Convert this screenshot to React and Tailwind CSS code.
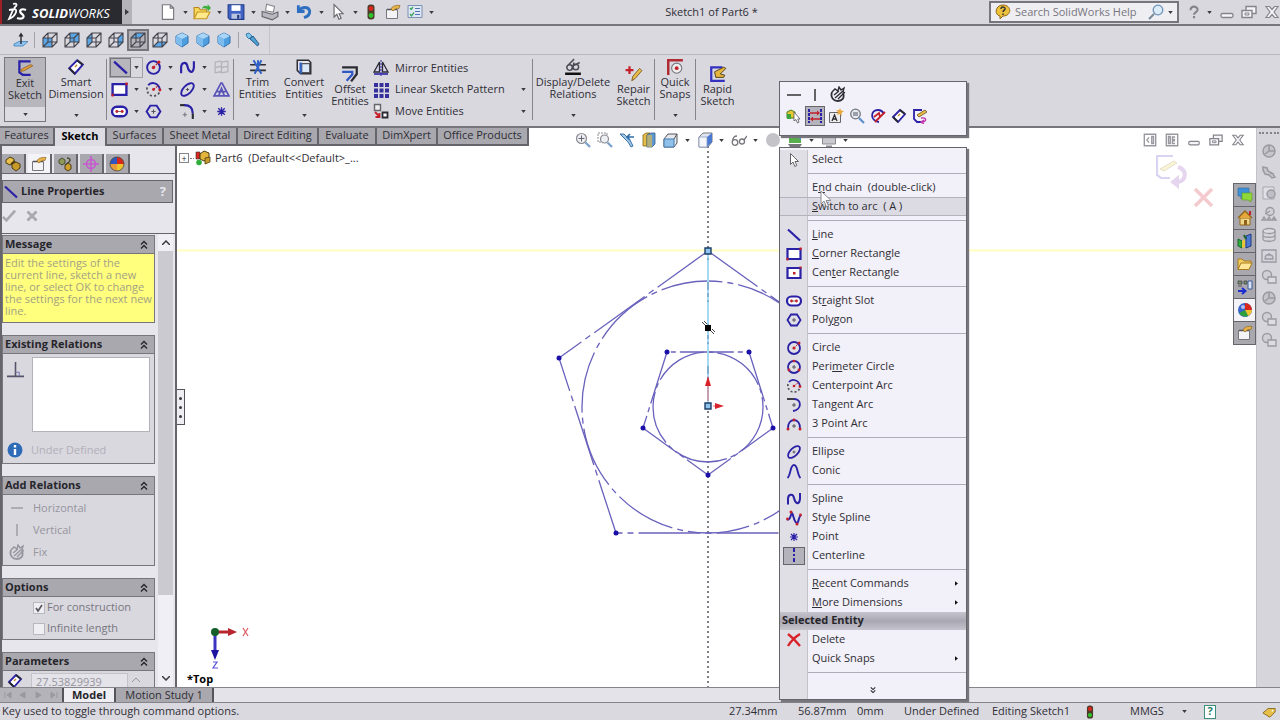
import { useState } from 'react'

const BLUE = '#2a21a6'
const RED = '#c3202c'
const DARK = '#2b2b33'
const GREY = '#9a98a0'

// every glyph is drawn on a 16x16 grid
const glyphs = {
  newDoc: <path d="M3 1.5h7l3 3v10H3z M10 1.5v3h3" fill="#fff" stroke="#77767c" />,
  open: (
    <>
      <path d="M1 14V4h4l1.5 2H12v3" fill="#f7d95a" stroke="#b8861b" />
      <path d="M1 14l3-6h11l-3 6z" fill="#ffe98a" stroke="#c8951f" />
      <path d="M8 5c1-3 3-3 5-2V1l3 3.500-3 3V5.500c-2-1-3-1-5-.5z" fill="#3cae3a" />
    </>
  ),
  save: (
    <>
      <path d="M1 1.500h14v13H2.500L1 13z" fill="#3f62c4" stroke="#233a84" />
      <path d="M4 2h8v5H4z" fill="#fff" />
      <path d="M4 9.500h8V14H4z" fill="#b9c4de" />
      <path d="M9 10.500h2V14H9z" fill="#233a84" />
    </>
  ),
  print: (
    <>
      <path d="M4 7l1-6 7 2-1 5z" fill="#fff" stroke="#8b8a90" />
      <path d="M1 7.500l9 2.500 5-2v4l-5 3-9-3z" fill="#b9b8c0" stroke="#66656c" />
    </>
  ),
  undo: <path d="M3 2v5.500h5.500M3.500 7C6 3 12 3 13 7c.5 3-2 5-5 6" fill="none" stroke="#2f6fc0" strokeWidth="2.600" />,
  cursor: <path d="M4.500 1.500v11l2.500-2.500 1.800 4.500 2-1L9 9.500h3.500z" fill="#fff" stroke="#66656c" />,
  traffic: (
    <>
      <rect x="4.500" y=".5" width="7" height="15" rx="3" fill="#4a3a2a" />
      <circle cx="8" cy="4.500" r="2.400" fill="#d8281e" />
      <circle cx="8" cy="11.500" r="2.400" fill="#2fc32b" />
    </>
  ),
  props: (
    <>
      <path d="M1.500 5.500h11v9h-11z" fill="#f4f3f6" stroke="#77767c" />
      <path d="M2 5.500h10" stroke="#55545a" strokeWidth="1.500" />
      <path d="M6 5c1-3 5-4 9-3.500l-1 3C12 4 10 5 8 7z" fill="#e8b24a" stroke="#8f6418" strokeWidth=".7" />
    </>
  ),
  options: (
    <>
      <path d="M1 1.500h14v12H1z" fill="#dfe8f4" stroke="#7a90b4" />
      <path d="M8 4.500h5M8 7.500h5M8 10.500h5" stroke="#4d75b8" />
      <path d="M3 4l1.200 1.500L6 3M3 10l1.500 2L7 8.500" fill="none" stroke="#3da55b" strokeWidth="1.300" />
    </>
  ),
  normalTo: (
    <>
      <path d="M1 12l5-2.500h9L10 14H1z" fill="#8ec3ee" stroke="#3c7db8" strokeWidth=".8" />
      <path d="M8 12V4" stroke={DARK} strokeWidth="1.400" />
      <path d="M8 .5l2.500 4h-5z" fill={DARK} />
    </>
  ),
  flashlight: (
    <>
      <path d="M1 2l3-1 3 3-3 3-2-2z" fill="#7fc4ea" stroke="#3d7fb0" />
      <path d="M5 7l3-3 6 8-1.500 2z" fill="#4e9fd2" stroke="#2c5f8a" />
    </>
  ),
  isoCube: (
    <>
      <path d="M8 1l6 3v7l-6 4-6-4V4z" fill="#4f9ee0" stroke="#2c6fae" />
      <path d="M8 1l6 3-6 3-6-3z" fill="#a9d5f6" />
      <path d="M8 7v8L2 11V4z" fill="#7fbcee" />
    </>
  ),
  exitSketch: (
    <>
      <path d="M13 2H3v10l3 2h7" fill="none" stroke={BLUE} strokeWidth="2" />
      <path d="M5 9l8-4 2 1-8 4.500-3 .5z" fill="#e9a13a" stroke="#8f5c18" strokeWidth=".7" />
    </>
  ),
  dimension: (
    <>
      <path d="M2 9l7-7 5 4-7 8z" fill="#fff" stroke={BLUE} strokeWidth="1.800" />
      <path d="M2 9l5 5M9 2l5 4" stroke={DARK} strokeWidth="1.800" />
      <path d="M7 8l2-2" stroke="#c78c28" strokeWidth="1.400" />
    </>
  ),
  line: <path d="M2 2.500l12 11" stroke={BLUE} strokeWidth="2.200" />,
  circle: (
    <>
      <circle cx="8" cy="8" r="6" fill="none" stroke={BLUE} strokeWidth="1.800" />
      <path d="M8 8l5-5" stroke={RED} strokeDasharray="2 1" />
      <circle cx="8" cy="8" r="1.600" fill={RED} />
      <circle cx="13" cy="3" r="1.500" fill={RED} />
    </>
  ),
  perimeter: (
    <>
      <circle cx="8" cy="8" r="6" fill="none" stroke={BLUE} strokeWidth="1.800" />
      <path d="M8 6v4M6 8h4" stroke="#55545a" />
      <circle cx="3" cy="11" r="1.400" fill={RED} />
      <circle cx="13" cy="11" r="1.400" fill={RED} />
      <circle cx="8" cy="2" r="1.300" fill={RED} />
    </>
  ),
  spline: <path d="M2 13.500V8c0-5 5-6 6-1s5 8 6 1V2" fill="none" stroke={BLUE} strokeWidth="2" />,
  plane: <path d="M2 3l5-1 1 1 6-1v10l-6 1-1-1-5 1zM8 3v10M2 8l5-1 1 1 6-1" fill="none" stroke="#b5b3ba" strokeWidth="1.200" />,
  rect: (
    <>
      <path d="M1.500 3h13v10h-13z" fill="#fff" stroke={BLUE} strokeWidth="2.200" />
      <path d="M13.500 1.500h2.200v2.500h-2.200zM.5 12h2v2.500h-2z" fill={RED} />
    </>
  ),
  centerRect: (
    <>
      <path d="M1.500 3h13v10h-13z" fill="#fff" stroke={BLUE} strokeWidth="2.200" />
      <path d="M7 7h2.500v2.500H7zM13.500 1.500h2v2h-2z" fill={RED} />
    </>
  ),
  arc: (
    <>
      <path d="M3 4c3-4 10-2 11 4" fill="none" stroke={BLUE} strokeWidth="1.800" />
      <path d="M2 6c-1 5 3 9 7 8 3-.5 5-3 5-5" fill="none" stroke="#55545a" strokeWidth="1.700" strokeDasharray="2 2" />
      <path d="M8 8l5-4" stroke={RED} strokeDasharray="2 1" />
      <circle cx="8" cy="8" r="1.300" fill={RED} />
      <circle cx="14" cy="8.500" r="1.400" fill={RED} />
    </>
  ),
  ellipse: (
    <>
      <ellipse cx="8" cy="8" rx="7.500" ry="3.800" transform="rotate(-45 8 8)" fill="none" stroke={BLUE} strokeWidth="1.800" />
      <path d="M8 6.500v3M6.500 8h3" stroke="#55545a" />
    </>
  ),
  text: <path d="M1 14L7.500 2h1L15 14zM4 10h8M5.500 13.500L8 7l2.500 6.500" fill="none" stroke="#5a54b8" strokeWidth="1.600" />,
  slot: (
    <>
      <rect x="1" y="3.500" width="14" height="9" rx="4.500" fill="#fff" stroke={BLUE} strokeWidth="2.200" />
      <path d="M5 8h6" stroke="#77767c" />
      <circle cx="5.500" cy="8" r="1.400" fill={RED} />
      <circle cx="10.500" cy="8" r="1.400" fill={RED} />
    </>
  ),
  polygon: (
    <>
      <path d="M5 2.500h6L14.500 8 11 13.500H5L1.500 8z" fill="none" stroke={BLUE} strokeWidth="1.800" />
      <path d="M8 6v4M6 8h4" stroke="#55545a" />
    </>
  ),
  fillet: (
    <>
      <path d="M1 2h5" stroke={DARK} strokeWidth="2" />
      <path d="M5 2c6 0 8 3 8 8" fill="none" stroke={BLUE} strokeWidth="2" />
      <path d="M13 10v5" stroke={DARK} strokeWidth="2" />
      <path d="M5.500 9v4M3.500 11h4" stroke="#77767c" />
    </>
  ),
  tangentArc: (
    <>
      <path d="M1 2h7" stroke={DARK} strokeWidth="1.800" />
      <path d="M8 2c8 0 8 11-1 12" fill="none" stroke={BLUE} strokeWidth="1.800" />
      <path d="M8 6v4M6 8h4" stroke="#55545a" />
    </>
  ),
  threeArc: (
    <>
      <path d="M2 13C1 1 15 1 14 13" fill="none" stroke={BLUE} strokeWidth="1.800" />
      <path d="M8 8v4M6 10h4" stroke="#55545a" />
      <circle cx="2" cy="13" r="1.500" fill={RED} />
      <circle cx="14" cy="13" r="1.500" fill={RED} />
      <circle cx="8" cy="4" r="1.400" fill={RED} />
    </>
  ),
  conic: <path d="M1.500 15C5 12 4 2 8 2s3 10 6.500 13" fill="none" stroke={BLUE} strokeWidth="1.900" />,
  styleSpline: (
    <>
      <path d="M1 9c3 3 4-6 5-6s2 10 5 10c2 0 1-6 4-8" fill="none" stroke={BLUE} strokeWidth="2" />
      <circle cx="5" cy="2" r="1.500" fill={RED} />
      <circle cx="11" cy="14" r="1.500" fill={RED} />
      <circle cx="1.500" cy="9" r="1.400" fill={RED} />
      <circle cx="14.500" cy="5" r="1.400" fill={RED} />
    </>
  ),
  point: <path d="M8 4v8M4 8h8M5 5l6 6M11 5l-6 6" stroke={BLUE} strokeWidth="1.200" />,
  centerline: <path d="M8 0v16" stroke={BLUE} strokeWidth="2" strokeDasharray="4 2 2 2" />,
  trim: (
    <>
      <path d="M1 6h14M1 11h14" stroke={DARK} strokeWidth="1.400" />
      <path d="M4 2l7 12M11 2L5 14M8 2v4" stroke="#2f62c8" strokeWidth="1.800" />
    </>
  ),
  convert: (
    <>
      <path d="M2 2h10l2 2v10H5l-3-3z" fill="#e6e5ec" stroke={DARK} strokeWidth="1.300" />
      <path d="M6 5h7v8H6z" fill="#dbe8f8" stroke="#55545a" />
      <path d="M5 4v10" stroke="#2f62c8" strokeWidth="2" />
    </>
  ),
  offset: (
    <>
      <path d="M1 2h13v6L9 14.500" fill="none" stroke={DARK} strokeWidth="2" />
      <path d="M1 6h9v2.500L5 14" fill="none" stroke="#3157c4" strokeWidth="2" />
    </>
  ),
  mirror: (
    <>
      <path d="M6.500 2L1 12h5.500zM9.500 2L15 12H9.500z" fill="#d7d5f0" stroke={DARK} strokeWidth="1.300" />
      <path d="M1 14h14" stroke={BLUE} strokeWidth="1.600" />
      <path d="M8 0v16" stroke={BLUE} strokeDasharray="2 1" />
    </>
  ),
  pattern: <path d="M1 1h4v4H1zM6.500 1h4v4h-4zM12 1h4v4h-4zM1 6.500h4v4H1zM6.500 6.500h4v4h-4zM12 6.500h4v4h-4zM1 12h4v4H1zM6.500 12h4v4h-4zM12 12h4v4h-4z" fill="#35309c" />,
  move: (
    <>
      <path d="M1.500 1.500h6v6h-6z" fill="#eee" stroke="#66656c" strokeWidth="1.400" />
      <path d="M9.500 9.500h5v5h-5z" fill="#fff" stroke={DARK} strokeWidth="1.800" />
      <path d="M2 9l4 4M6.500 10v4h-4" fill="none" stroke={RED} strokeWidth="1.800" />
    </>
  ),
  relations: (
    <>
      <path d="M1 14h14" stroke="#111" strokeWidth="2.200" />
      <circle cx="5" cy="8.500" r="2.500" fill="none" stroke="#4d4c55" strokeWidth="1.300" />
      <circle cx="10.500" cy="8" r="2.500" fill="none" stroke="#4d4c55" strokeWidth="1.300" />
      <path d="M4 6l5-5M8 7l6-3M7 10l2-6" fill="none" stroke="#4d4c55" strokeWidth="1.300" />
    </>
  ),
  repair: (
    <>
      <path d="M4 1v7M.5 4.500h7" stroke={RED} strokeWidth="2" />
      <path d="M6 14l1-4 6-7 2 2-6 7z" fill="#e9bd4a" stroke="#7a5a1c" strokeWidth=".8" />
    </>
  ),
  snaps: (
    <>
      <path d="M2 15V2h13" fill="none" stroke="#b02a34" strokeWidth="2.200" />
      <circle cx="9.500" cy="9" r="4.500" fill="#eee" stroke="#77767c" />
      <circle cx="9.500" cy="9" r="1.700" fill={RED} />
    </>
  ),
  rapid: (
    <>
      <path d="M12 2H2v12h12" fill="none" stroke="#3430c0" strokeWidth="2" />
      <path d="M5 6l8-4 2 1-5 5 4 1-1 2H6z" fill="#e4b43c" stroke="#4a3a14" strokeWidth=".8" />
    </>
  ),
  fix: (
    <>
      <path d="M2 6c-2 6 2 9 6 9 4 0 7-3 5-8" fill="none" stroke="currentColor" strokeWidth="1.800" />
      <path d="M2 6l3-3 3 2 1-4 2 3 3-2-1 4 2 1M4 9l5-4M5 12l8-7M8 13l5-5" fill="none" stroke="currentColor" strokeWidth="1.400" />
    </>
  ),
  selectOther: (
    <>
      <path d="M1 4l4-2 4 2v6H1z" fill="#e8c82e" stroke="#4a7f2a" />
      <path d="M1 6h4v5H1z" fill="#39a53a" />
      <path d="M8 4v9l2-1.500L11.500 15l1.500-.8L11.800 11H14z" fill="#fff" stroke="#55545a" strokeWidth=".8" />
    </>
  ),
  construction: (
    <>
      <path d="M2 1v14M14 1v14" stroke={BLUE} strokeWidth="2" strokeDasharray="3 1" />
      <path d="M3 5h9M4 11h9" stroke={RED} strokeWidth="1.500" />
      <path d="M10 2.500L13 5l-3 2.500zM6 8.500L3 11l3 2.500z" fill={RED} />
    </>
  ),
  addImage: (
    <>
      <path d="M1.500 4.500h11v10h-11z" fill="#eee" stroke="#66656c" />
      <path d="M4 13l2.500-6L9 13M5 11h3" fill="none" stroke={DARK} strokeWidth="1.300" />
      <path d="M12 0l1 2.500L16 3l-2.500 2L14 8l-2.500-2L9 7l1-3-2-2 3 .3z" fill="#e9a63a" />
    </>
  ),
  zoomSel: (
    <>
      <circle cx="6.500" cy="6" r="4.800" fill="#e4ebf5" stroke="#77767c" strokeWidth="1.300" />
      <path d="M4 5h5M4 7h5" stroke="#55545a" />
      <path d="M10 10l5 5" stroke="#5b90cc" strokeWidth="2.200" />
    </>
  ),
  modify: (
    <>
      <path d="M9 14C0 13 0 2 8 2c3 0 5 2 6 4" fill="none" stroke={BLUE} strokeWidth="1.800" />
      <path d="M5 14L15 4M4 9l5-4 1 4" fill="none" stroke={RED} strokeWidth="1.800" />
    </>
  ),
  editSketch: (
    <>
      <path d="M10 2H2v9l3 3h5" fill="none" stroke={BLUE} strokeWidth="1.800" />
      <path d="M5 7l8-5 2 2-8 5z" fill="#e9bd4a" stroke="#6a4f18" strokeWidth=".8" />
      <path d="M9 10c6-1 6 4 1 4m2-2l-3 2 3 2" fill="none" stroke="#c036b0" strokeWidth="1.400" />
    </>
  ),
  del: <path d="M2 2c4 3 8 7 12 12M14 2C9 5 5 9 2 14" fill="none" stroke="#d8232a" strokeWidth="2.400" />,
  check: <path d="M1 9l4 4L15 2" fill="none" stroke="currentColor" strokeWidth="3" />,
  cross: <path d="M2 2l12 12M14 2L2 14" stroke="currentColor" strokeWidth="3.600" />,
  feature: (
    <>
      <path d="M1 4l4-3 4 2v4L5 9 1 7z" fill="#e8c04a" stroke="#4f3c10" />
      <path d="M7 8l4-2 4 2v4l-4 3-4-3z" fill="#c89a28" stroke="#4f3c10" />
      <path d="M6 8l4-3" stroke="#4f3c10" strokeWidth="2" />
    </>
  ),
  config: (
    <>
      <path d="M2 4l3-2 3 2v3L5 9 2 7z" fill="#8f9a58" stroke="#4a4a30" />
      <path d="M8 9l3-2 3 2v4l-3 2-3-2z" fill="#d0a02c" stroke="#4f3c10" />
      <path d="M10 2c3 0 4 2 2 4l-4 3" fill="none" stroke="#4a4a30" strokeWidth="1.500" />
    </>
  ),
  dimXpert: (
    <>
      <circle cx="8" cy="8" r="4.500" fill="none" stroke="#c65ad0" strokeWidth="1.600" />
      <path d="M8 0v16M0 8h16" stroke="#c65ad0" strokeWidth="1.600" />
    </>
  ),
  displayBall: (
    <>
      <path d="M8 8V1a7 7 0 017 7z" fill="#d8281e" />
      <path d="M8 8h7a7 7 0 01-7 7z" fill="#f0c52c" />
      <path d="M8 8v7a7 7 0 01-7-7z" fill="#e89a3a" />
      <path d="M8 1v7H1a7 7 0 017-7z" fill="#2f55c0" />
      <circle cx="8" cy="8" r="7" fill="none" stroke="#444" strokeWidth=".8" />
    </>
  ),
  part: (
    <>
      <path d="M1 2h4v7H1z" fill="#d8281e" stroke="#333" strokeWidth=".6" />
      <path d="M5 4l4-3 5 2v5l-5 3-4-2z" fill="#e2b63c" stroke="#4f3c10" />
      <path d="M10 8l5-1v5l-5 2z" fill="#c89a28" stroke="#4f3c10" strokeWidth=".8" />
      <circle cx="4" cy="12.500" r="2.800" fill="#2fae3b" />
    </>
  ),
  perpendicular: (
    <>
      <path d="M8 1v13M0 14.500h16" stroke="#55546a" strokeWidth="1.500" />
      <path d="M8 10.500h3.500V14" fill="none" stroke="#7a78b8" />
    </>
  ),
  zoomFit: (
    <>
      <circle cx="6.500" cy="6.500" r="5" fill="#edeff4" stroke="#8c8b92" strokeWidth="1.200" />
      <path d="M6.500 3.500v6M3.500 6.500h6" stroke="#66656c" />
      <path d="M10.500 10.500L15 15" stroke="#7fa2cc" strokeWidth="2.400" />
    </>
  ),
  zoomArea: (
    <>
      <path d="M1 1h9v9H1z" fill="none" stroke="#8c8b92" strokeDasharray="2 1" />
      <circle cx="7.500" cy="7" r="4" fill="#edeff4" stroke="#8c8b92" strokeWidth="1.200" />
      <path d="M10.500 10.500L15 15" stroke="#7fa2cc" strokeWidth="2.400" />
    </>
  ),
  prevView: (
    <>
      <path d="M1 2l8 8 3 5 2-1-3-6-6-6z" fill="#9fc6e6" stroke="#3d74a8" />
      <path d="M15 5H8m3-3L8 5l3 3" fill="none" stroke="#2f6ca8" strokeWidth="1.600" />
    </>
  ),
  section: (
    <>
      <path d="M2 3l3-2h4l-3 2v11H2z" fill="#e6bf48" stroke="#84661c" strokeWidth=".8" />
      <path d="M6 3l4-2h4v11l-3 3H6z" fill="#5f97cf" stroke="#33618f" strokeWidth=".8" />
      <path d="M6 3h5v12H6z" fill="#e6bf48" opacity=".6" />
    </>
  ),
  orient: (
    <>
      <path d="M1 7l4-5h9v9l-3 4H1z" fill="#e4e8ef" stroke="#55545a" />
      <path d="M1 7h10v8H1z" fill="#8fc1ea" stroke="#447cb0" />
      <path d="M11 7l3-5" stroke="#55545a" />
    </>
  ),
  style: (
    <>
      <path d="M2 5l4-4h9v9l-4 5H2z" fill="#dfe6f2" stroke="#77767c" />
      <path d="M10 5l5-4v9l-5 5z" fill="#4a79d4" />
      <path d="M2 5h8v10H2z" fill="#f5f6fa" stroke="#8c9cc0" strokeWidth=".8" />
    </>
  ),
  glasses: (
    <>
      <circle cx="4" cy="10.500" r="2.800" fill="none" stroke="#77767c" strokeWidth="1.300" />
      <circle cx="11" cy="9.500" r="2.500" fill="none" stroke="#77767c" strokeWidth="1.300" />
      <path d="M1.500 9C2 5 4 4 6 4M13 8l3-4" fill="none" stroke="#77767c" strokeWidth="1.300" />
    </>
  ),
  greyBall: <circle cx="8" cy="8" r="7" fill="#c4c3c8" />,
  scene: (
    <>
      <path d="M2 3h12v8H2z" fill="#57b04c" />
      <path d="M8 3h6v5z" fill="#4a86cf" />
      <path d="M1 12h14l-2 3H3z" fill="#77767c" />
    </>
  ),
  monitor: (
    <>
      <path d="M1.500 3h13v9h-13z" fill="#c9c8ce" stroke="#8c8b92" />
      <path d="M5 14.500h6" stroke="#8c8b92" strokeWidth="2" />
    </>
  ),
  paneLeft: <path d="M1.500 1.500h13v13h-13zM7 5L4.500 8 7 11M10 4v8h2V4z" fill="none" stroke={GREY} strokeWidth="1.600" />,
  paneRight: <path d="M1.500 1.500h13v13h-13zM4 4v8h2V4zM11.500 4.500h-3v3h3M11.500 9h-3v3h3" fill="none" stroke={GREY} strokeWidth="1.600" />,
  minimize: <rect x="2" y="9.500" width="12" height="4" rx="1.500" fill="#f6f5f9" stroke="#85848b" strokeWidth="1.300" />,
  restore: (
    <>
      <path d="M5 2.500h10v7H5z" fill="#f6f5f9" stroke="#85848b" strokeWidth="1.400" />
      <path d="M1 6.500h10v7H1z" fill="#f6f5f9" stroke="#85848b" strokeWidth="1.400" />
      <path d="M4 9h4v2H4z" fill="none" stroke="#85848b" />
    </>
  ),
  close: <path d="M2 2.500h3.500L8 5.500l2.500-3H14L10 8l4 5.500h-3.500L8 10.500l-2.500 3H2L6 8z" fill="#f6f5f9" stroke="#85848b" strokeWidth="1.200" />,
  forum: (
    <>
      <path d="M1 1h11v8H6l-2 3V9H1z" fill="#3f8fd4" stroke="#2b6aa5" strokeWidth=".6" />
      <path d="M5 6h10v7h-1v2l-3-2H5z" fill="#8ed63a" stroke="#5e9c1e" strokeWidth=".6" />
    </>
  ),
  house: (
    <>
      <path d="M3 8h10v7H3z" fill="#f0d68a" stroke="#8f6418" />
      <path d="M1 8l7-7 7 7" fill="#e6a83a" stroke="#8f6418" strokeWidth="1.300" />
      <path d="M12 1h2v4h-2z" fill={RED} />
      <path d="M7 10h3v5H7z" fill="#8f6418" />
    </>
  ),
  library: (
    <>
      <path d="M1 6l4 2v7l-4-2z" fill="#2fae3b" stroke="#17662a" />
      <path d="M5 8l3-2v8l-3 1z" fill="#e6c53a" />
      <path d="M9 3l5-2v12l-5 2z" fill="#4a79d4" stroke="#233a84" />
      <path d="M7 2l2 4" stroke="#17662a" strokeWidth="2" />
    </>
  ),
  folder: (
    <>
      <path d="M1 13V3h4l2 2h7v3" fill="#f3cf62" stroke="#a87a1c" />
      <path d="M1 13.500L4 7h11l-3 6.500z" fill="#ffe698" stroke="#a87a1c" />
    </>
  ),
  palette: (
    <>
      <path d="M1 2h4v3H1zM1 7h4M7 2h3v3H7z" fill="#77906a" stroke="#444" strokeWidth=".8" />
      <path d="M11 2h4v8h-4z" fill="#d7e2f4" stroke="#3c5d9c" />
      <path d="M1 12h7m-3-3l3.500 3L5 15" fill="none" stroke="#1e2fd0" strokeWidth="2" />
    </>
  ),
  globe: (
    <>
      <circle cx="8" cy="8" r="7" fill="#3a62cf" />
      <path d="M8 8V1a7 7 0 017 7z" fill="#d8281e" />
      <path d="M8 8h7a7 7 0 01-4 6z" fill="#f0c52c" />
      <path d="M8 8l3 6a7 7 0 01-9-3z" fill="#2f9f3c" />
      <circle cx="6" cy="5" r="2" fill="#fff" opacity=".6" />
    </>
  ),
  greyGlobe: (
    <>
      <circle cx="8" cy="8" r="6" fill="#c6c4cb" stroke="#9b99a1" strokeWidth="1.500" />
      <path d="M8 2v6h6M4 11l4-3" fill="none" stroke="#9b99a1" strokeWidth="1.500" />
    </>
  ),
  greyLink: <path d="M2 3l4 1 1 3 4 2 3 4-3 1-3-3-4-1-2-4zM9 9l4 1" fill="#c6c4cb" stroke="#9b99a1" strokeWidth="1.500" />,
  greySheet: (
    <>
      <path d="M2 2h11v12H2z" fill="#e0dfe5" stroke="#a9a7af" />
      <circle cx="10" cy="9" r="4" fill="#bfbdc5" stroke="#9b99a1" strokeWidth="1.400" />
    </>
  ),
  greyTree: (
    <>
      <circle cx="9" cy="5.500" r="4" fill="#d2d0d7" stroke="#9b99a1" strokeWidth="1.400" />
      <path d="M1 14l2-3 2 3zM6 14l2-3 2 3zM11 14l2-3 2 3zM4 8l5-3" fill="#c6c4cb" stroke="#9b99a1" strokeWidth="1.300" />
    </>
  ),
  greyStack: (
    <>
      <ellipse cx="8" cy="4" rx="6" ry="2.500" fill="#dddce2" stroke="#9b99a1" strokeWidth="1.300" />
      <path d="M2 4v8c0 3 12 3 12 0V4M2 8c0 3 12 3 12 0" fill="none" stroke="#9b99a1" strokeWidth="1.300" />
    </>
  ),
  greyFrame: (
    <>
      <path d="M1 2h14v12H1z" fill="none" stroke="#9b99a1" strokeWidth="1.300" />
      <path d="M4 11c0-6 8-6 8 0zM8 5v3" fill="#d2d0d7" stroke="#9b99a1" strokeWidth="1.300" />
    </>
  ),
  greyPair: (
    <>
      <circle cx="6" cy="6" r="4.500" fill="#d2d0d7" stroke="#9b99a1" strokeWidth="1.400" />
      <path d="M7 8h8v6H7z" fill="#dddce2" stroke="#9b99a1" strokeWidth="1.300" />
    </>
  ),
  tag: (
    <>
      <path d="M1 9l6-5h8v4l-6 6z" fill="#e6bf48" stroke="#84661c" />
      <circle cx="12" cy="6.500" r="1" fill="#fff" />
    </>
  ),
  helpBubble: (
    <>
      <path d="M8 1c9 0 9 11 0 11l-3 3v-3C-1 11 0 1 8 1z" fill="#edc13c" stroke="#8f6a18" />
      <path d="M6 5c0-3 4.500-2 4 0-.5 1.500-2 1.500-2 3M8 9.500v1.500" fill="none" stroke="#333" strokeWidth="1.500" />
    </>
  ),
  lens: (
    <>
      <circle cx="10" cy="6" r="4.800" fill="#dcebf6" stroke="#6d93b8" strokeWidth="1.300" />
      <path d="M6 10l-5 5" stroke="#77889c" strokeWidth="2" />
    </>
  ),
  question: <path d="M4 6c0-6 9-5 8 0-.5 2-4 2.500-4 5M8 12.500V15" fill="none" stroke="#85848b" strokeWidth="2.400" />,
}

function Icon({ name, className = 'size-4' }) {
  return (
    <svg viewBox="0 0 16 16" className={`shrink-0 ${className}`} fill="none" aria-hidden="true">
      {glyphs[name]}
    </svg>
  )
}

// wireframe cube with one face filled
const cubeFaces = {
  front: 'M1 6h9v9H1z',
  back: 'M6 1h9v9H6z',
  left: 'M1 6l5-5v9l-5 5z',
  right: 'M10 6l5-5v9l-5 5z',
  top: 'M1 6l5-5h9l-5 5z',
  bottom: 'M1 15l5-5h9l-5 5z',
}

function Cube({ face }) {
  return (
    <svg viewBox="0 0 16 16" className="size-4 shrink-0" fill="none" aria-hidden="true">
      <path d={cubeFaces[face]} fill="#5aa6e6" />
      <path d="M1 6h9v9H1zM6 1h9v9H6zM1 6l5-5M10 6l5-5M1 15l5-5M10 15l5-5" stroke="#45444c" strokeWidth="1.100" />
    </svg>
  )
}

function Caret() {
  return (
    <svg viewBox="0 0 6 4" className="h-[3px] w-[5px] shrink-0" aria-hidden="true">
      <path d="M0 0h6L3 4z" fill="#3a3940" />
    </svg>
  )
}

function TitleBar() {
  const tools = [
    ['newDoc', 'New'],
    ['open', 'Open'],
    ['save', 'Save'],
    ['print', 'Print'],
    ['undo', 'Undo'],
    ['cursor', 'Select'],
  ]

  return (
    <header className="flex h-[26px] shrink-0 items-center border-b-2 border-[#77767d] bg-[#d9d8df]">
      <div className="flex h-full w-[122px] items-center gap-1 border-l-2 border-[#9c2024] bg-[#2a2b31] pl-1 text-white">
        <svg viewBox="0 0 22 20" className="h-5 w-[22px] shrink-0" fill="none" aria-hidden="true">
          <path d="M7 2c4-1 5 1 1 4M3 8l6-1c3 1 0 8-6 10l4-9" stroke="#fff" strokeWidth="1.800" />
          <path d="M20 8c-5-2-8 1-4 4s0 6-5 4" stroke="#fff" strokeWidth="2.200" />
        </svg>
        <span className="pt-0.5 text-[13px] leading-4 italic"><b>SOLID</b>WORKS</span>
      </div>
      <button aria-label="Expand menu" className="flex h-full w-[10px] items-center justify-center bg-[#b4b3ba]">
        <svg viewBox="0 0 4 6" className="h-1.5 w-1"><path d="M0 0v6l4-3z" fill="#3a3940" /></svg>
      </button>
      <div className="ml-[27px] flex items-center">
        {tools.map(([icon, label]) => (
          <button key={icon} aria-label={label} className="flex w-[34px] items-center gap-1.5">
            <Icon name={icon} className="size-[18px]" />
            <Caret />
          </button>
        ))}
        <div className="flex items-center gap-1.5">
          <button aria-label="Rebuild"><Icon name="traffic" /></button>
          <button aria-label="File properties"><Icon name="props" /></button>
          <button aria-label="Options" className="flex items-center gap-1.5"><Icon name="options" /><Caret /></button>
        </div>
      </div>
      <h1 className="min-w-0 flex-1 text-center text-[11px]">Sketch1 of Part6 *</h1>
      <form className="flex h-[22px] w-[190px] items-center gap-1 border-2 border-[#77767d] bg-[#efeef3] px-1">
        <Icon name="helpBubble" />
        <input aria-label="Search SolidWorks Help" placeholder="Search SolidWorks Help" className="w-full min-w-0 flex-1 bg-transparent text-[11px] outline-none placeholder:text-[#77767d]" />
        <Icon name="lens" />
        <Caret />
      </form>
      <div className="flex w-[101px] items-center justify-between pl-2">
        <button aria-label="Help" className="flex items-center gap-1.5"><Icon name="question" className="size-3.5" /><Caret /></button>
        <button aria-label="Minimize"><Icon name="minimize" /></button>
        <button aria-label="Restore"><Icon name="restore" /></button>
        <button aria-label="Close"><Icon name="close" /></button>
      </div>
    </header>
  )
}

function ViewBar() {
  return (
    <div className="flex h-[29px] shrink-0 items-center border-b border-[#b9b8bf] bg-[#dad9e0] pl-2.5">
      <button aria-label="Normal to" className="flex h-[22px] w-[22px] items-center justify-center"><Icon name="normalTo" /></button>
      <div className="mx-0.5 h-4 w-px bg-[#a3a2a9]" />
      <div className="flex pl-0.5">
        {Object.keys(cubeFaces).map(face => (
          <button
            key={face}
            aria-label={`View ${face}`}
            className={`flex h-[22px] w-[22px] items-center justify-center ${face === 'top' ? 'border-2 border-[#77767d] bg-[#b4b3ba]' : ''}`}
          >
            <Cube face={face} />
          </button>
        ))}
        {['Isometric', 'Dimetric', 'Trimetric'].map(view => (
          <button key={view} aria-label={view} className="flex h-[22px] w-[21px] items-center justify-center">
            <Icon name="isoCube" />
          </button>
        ))}
      </div>
      <div className="mx-1 h-4 w-px bg-[#a3a2a9]" />
      <button aria-label="View orientation" className="ml-0.5"><Icon name="flashlight" /></button>
      <div className="ml-2 h-full w-px bg-[#c4c3ca]" />
    </div>
  )
}

function BigButton({ icon, label, menu, active, low, className }) {
  return (
    <button
      className={`flex shrink-0 flex-col items-center text-[11px] leading-3 ${low ? 'pt-2' : 'pt-px'} ${active ? 'border border-[#77767d] bg-[#b7b6bd]' : ''} ${className}`}
    >
      <Icon name={icon} className="size-[18px]" />
      <span className="whitespace-pre">{label}</span>
      {menu && (
        <span className={`mt-auto flex h-3.5 w-full items-center justify-center ${active ? 'bg-[#dddce3]' : ''}`}><Caret /></span>
      )}
    </button>
  )
}

function Divider() {
  return <div className="my-0.5 w-px shrink-0 self-stretch bg-[#85848b]" />
}

const sketchTools = [
  ['line', 'Line', true], ['circle', 'Circle', true], ['spline', 'Spline', true], ['plane', 'Plane', false],
  ['rect', 'Rectangle', true], ['arc', 'Arc', true], ['ellipse', 'Ellipse', true], ['text', 'Text', false],
  ['slot', 'Slot', true], ['polygon', 'Polygon', false], ['fillet', 'Fillet', true], ['point', 'Point', false],
]

function Ribbon() {
  return (
    <div className="flex h-[73px] shrink-0 border-b-2 border-[#77767d] bg-[#d9d8df] pt-0.5 pb-1 pl-1">
      <BigButton icon="exitSketch" label={'Exit\nSketch'} menu active className="w-[42px]" />
      <BigButton icon="dimension" label={'Smart\nDimension'} menu className="w-[60px]" />
      <Divider />
      <div className="ml-0.5 grid w-[124px] shrink-0 grid-cols-[34px_34px_34px_22px] grid-rows-3 items-center">
        {sketchTools.map(([icon, label, menu]) => (
          <button key={icon} aria-label={label} className={`flex h-[21px] items-center ${icon === 'line' ? 'border border-[#a3a2a9]' : ''}`}>
            <span className={`flex h-full w-[21px] items-center justify-center ${icon === 'line' ? 'border border-[#77767d] bg-[#b7b6bd]' : ''}`}>
              <Icon name={icon} className="size-[17px]" />
            </span>
            {menu && <span className="flex flex-1 justify-center"><Caret /></span>}
          </button>
        ))}
      </div>
      <Divider />
      <BigButton icon="trim" label={'Trim\nEntities'} menu className="w-[47px]" />
      <BigButton icon="convert" label={'Convert\nEntities'} menu className="w-[46px]" />
      <BigButton icon="offset" label={'Offset\nEntities'} low className="w-[46px]" />
      <div className="flex w-[159px] shrink-0 flex-col justify-between text-[11px]">
        <button className="flex h-[22px] items-center gap-1.5"><Icon name="mirror" />Mirror Entities</button>
        <button className="flex h-[22px] items-center gap-1.5"><Icon name="pattern" />Linear Sketch Pattern<span className="ml-auto pr-1.5"><Caret /></span></button>
        <button className="flex h-[22px] items-center gap-1.5"><Icon name="move" />Move Entities<span className="ml-auto pr-1.5"><Caret /></span></button>
      </div>
      <Divider />
      <BigButton icon="relations" label={'Display/Delete\nRelations'} menu className="w-[80px]" />
      <BigButton icon="repair" label={'Repair\nSketch'} low className="w-[41px]" />
      <Divider />
      <BigButton icon="snaps" label={'Quick\nSnaps'} menu className="w-[40px]" />
      <Divider />
      <BigButton icon="rapid" label={'Rapid\nSketch'} low className="w-[43px]" />
    </div>
  )
}

const commandTabs = [
  ['Features', 'w-[55px]'],
  ['Sketch', 'w-[52px]'],
  ['Surfaces', 'w-[57px]'],
  ['Sheet Metal', 'w-[74px]'],
  ['Direct Editing', 'w-[81px]'],
  ['Evaluate', 'w-[58px]'],
  ['DimXpert', 'w-[61px]'],
  ['Office Products', 'w-[91px]'],
]

function CommandTabs({ tab, setTab }) {
  return (
    <nav className="flex h-[18px] shrink-0 bg-white">
      {commandTabs.map(([name, width]) => (
        <button
          key={name}
          onClick={() => setTab(name)}
          className={`shrink-0 border-r-2 border-[#66656c] pb-0.5 text-[11px] leading-3 whitespace-nowrap ${width} ${
            name === tab ? 'bg-[#dddce3] font-bold text-black' : 'border-b-2 bg-[#a9a8af]'
          }`}
        >
          {name}
        </button>
      ))}
    </nav>
  )
}

function Chevrons({ down, className = 'h-2.5 w-2' }) {
  return (
    <svg viewBox="0 0 8 10" className={`shrink-0 ${className} ${down ? 'rotate-180' : ''}`} aria-hidden="true">
      <path d="M1 4.500l3-3 3 3M1 8.500l3-3 3 3" fill="none" stroke="#26252b" strokeWidth="1.400" />
    </svg>
  )
}

function Group({ title, children }) {
  return (
    <section className="shrink-0 border border-[#77767d] bg-[#d9d8df]">
      <h3 className="flex h-[18px] items-center justify-between border-b border-[#77767d] bg-[#a9a8af] pr-1.5 pl-0.5 text-[11px] font-bold text-[#26252b]">
        {title}
        <Chevrons />
      </h3>
      {children}
    </section>
  )
}

function PropertyPanel() {
  return (
    <aside className="flex min-h-0 w-[177px] shrink-0 flex-col border-r-2 border-l-2 border-[#66656c] bg-[#e7e6ed]">
      <div className="mt-2 flex h-5 gap-0.5 border-b border-[#66656c]">
        {['feature', 'props', 'config', 'dimXpert', 'displayBall'].map(icon => (
          <button
            key={icon}
            aria-label={icon}
            className={`flex w-6 items-center justify-center border-r-2 border-[#66656c] ${icon === 'props' ? 'bg-[#f4f3f8]' : 'bg-[#a9a8af]'}`}
          >
            <Icon name={icon} />
          </button>
        ))}
      </div>
      <h2 className="mt-1.5 mr-0.5 flex h-[23px] shrink-0 items-center gap-0.5 border border-[#66656c] bg-[#a9a8af] text-[11px] font-bold text-[#26252b]">
        <Icon name="line" />
        Line Properties
        <span className="mr-1.5 ml-auto text-[13px] text-[#e8e7ed]">?</span>
      </h2>
      <div className="flex h-[31px] shrink-0 items-center gap-2.5 border-b border-[#66656c] pb-1 text-[#a9a8af]">
        <button aria-label="OK"><Icon name="check" className="size-3.5" /></button>
        <button aria-label="Cancel"><Icon name="cross" className="size-3" /></button>
      </div>

      <div className="flex min-h-0 flex-1">
        <div className="flex min-h-0 w-[153px] flex-col gap-3 overflow-hidden pt-px text-[11px] text-[#96949c]">
          <Group title="Message">
            <p className="h-[68px] bg-[#ffff7d] pt-[3px] pl-0.5 leading-3 text-[#a3a184]">
              Edit the settings of the current line, sketch a new line, or select OK to change the settings for the next new line.
            </p>
          </Group>
          <Group title="Existing Relations">
            <div className="flex h-[83px] gap-2 px-1 pt-[3px]">
              <Icon name="perpendicular" className="mt-1 size-[17px]" />
              <ul aria-label="Existing relations" className="h-[75px] flex-1 border border-[#b4b3ba] bg-white" />
            </div>
            <div className="flex h-[26px] items-center gap-2 px-1 text-[#b1afb8]">
              <svg viewBox="0 0 16 16" className="size-4" aria-hidden="true">
                <circle cx="8" cy="8" r="7.500" fill="#2f6cb8" />
                <path d="M8 3v2.500M8 7v6" stroke="#fff" strokeWidth="2.400" />
              </svg>
              Under Defined
            </div>
          </Group>
          <Group title="Add Relations">
            <div className="flex flex-col pt-0.5 pb-0.5">
              <button className="flex h-[22px] items-center gap-2 px-1.5"><svg viewBox="0 0 16 16" className="size-4"><path d="M2 8h12" stroke="#96949c" strokeWidth="1.300" /></svg>Horizontal</button>
              <button className="flex h-[22px] items-center gap-2 px-1.5"><svg viewBox="0 0 16 16" className="size-4"><path d="M8 2v12" stroke="#96949c" strokeWidth="1.300" /></svg>Vertical</button>
              <button className="flex h-[22px] items-center gap-2 px-1.5"><Icon name="fix" />Fix</button>
            </div>
          </Group>
          <Group title="Options">
            <div className="flex flex-col text-[#77767d]">
              <OptionBox label="For construction" checked />
              <OptionBox label="Infinite length" />
            </div>
          </Group>
          <Group title="Parameters">
            <div className="flex h-[30px] items-start gap-2 px-1 pt-0.5">
              <Icon name="dimension" />
              <input aria-label="Length" readOnly value="27.53829939" className="h-4 w-[97px] border border-[#c4c3ca] bg-[#e4e3ea] px-1 text-[11px] leading-3 text-[#96949c]" />
              <svg viewBox="0 0 8 5" className="mt-1 -ml-1 h-[5px] w-2"><path d="M0 5l4-4 4 4" fill="none" stroke="#96949c" /></svg>
            </div>
          </Group>
        </div>
        <div className="ml-[3px] flex w-[15px] flex-col bg-[#f0eff5]">
          <button aria-label="Scroll up" className="flex h-[17px] items-center justify-center">
            <svg viewBox="0 0 8 5" className="h-[5px] w-2"><path d="M0 5l4-4 4 4" fill="none" stroke="#3a3940" strokeWidth="1.500" /></svg>
          </button>
          <div className="flex min-h-0 flex-1 flex-col"><div className="h-[82%] bg-[#cbcad0]" /></div>
          <button aria-label="Scroll down" className="flex h-[17px] items-center justify-center">
            <svg viewBox="0 0 8 5" className="h-[5px] w-2"><path d="M0 0l4 4 4-4" fill="none" stroke="#3a3940" strokeWidth="1.500" /></svg>
          </button>
        </div>
      </div>
    </aside>
  )
}

function OptionBox({ label, checked = false }) {
  return (
    <label className="flex h-[21px] items-center gap-0.5 pl-[30px]">
      <span className="relative flex size-3">
        <input type="checkbox" defaultChecked={checked} className="peer size-3 appearance-none border border-[#b9b8bf] bg-[#efeef3]" />
        <svg viewBox="0 0 12 12" className="pointer-events-none absolute inset-0 hidden size-3 peer-checked:block">
          <path d="M3 6l2 3 4-6" fill="none" stroke="#55545a" strokeWidth="1.600" />
        </svg>
      </span>
      {label}
    </label>
  )
}

// sketch geometry, relative to the part origin
const outerPentagon = [[0, -155], [-149, -48], [-92, 127], [92, 127], [149, -48]]
const innerPentagon = [[-41, -54], [-65, 22], [0, 69], [65, 22], [41, -54]]

function Sketch() {
  return (
    <svg className="absolute inset-0 size-full" fill="none" aria-label="Sketch">
      <path d="M0 104.500H1056" stroke="#ffffc0" strokeWidth="2" />
      <g transform="translate(531 260)">
        <path d="M0-260V290" stroke="#55545c" strokeWidth="1.500" strokeDasharray="2 3" />
        <g stroke="#6962bc" strokeWidth="1.300">
          <g strokeDasharray="62 5 6 5">
            <polygon points={outerPentagon.join(' ')} />
            <circle cy="1" r="126" />
          </g>
          <g strokeDasharray="54 4 5 4">
            <polygon points={innerPentagon.join(' ')} />
            <circle cy="1" r="55" />
          </g>
        </g>
        <path d="M0-155V0" stroke="#a6daf4" strokeWidth="2" />
        <path d="M0-155V0" stroke="#5d88a8" strokeDasharray="4 3 2 22 8 3" />
        {[...outerPentagon.slice(1), ...innerPentagon].map(([x, y]) => (
          <circle key={`${x},${y}`} cx={x} cy={y} r="2.500" fill="#1a10a8" />
        ))}
        <path d="M-3-158h6v6h-6zM-3-3h6v6h-6z" fill="#8fc4ee" stroke="#1c3f66" strokeWidth="1.400" />
        <path d="M-3-81h6v6h-6z" fill="#000" />
        <path d="M-6-84l3 3M-4-85l3 3M3-75l3 3M4-77l3 3" stroke="#44434a" />
        <path d="M0-5V-20M5 0H9" stroke="#e0656a" />
        <path d="M0-30l3 10h-6zM16 0L7-3v6z" fill="#d9232c" />
      </g>
    </svg>
  )
}

function HeadsUpBar() {
  return (
    <div className="absolute -top-3.5 left-[398px] flex items-center gap-1.5 text-[#77767c]">
      {['zoomFit', 'zoomArea', 'prevView', 'section'].map(icon => (
        <button key={icon} aria-label={icon}><Icon name={icon} /></button>
      ))}
      {['orient', 'style', 'glasses'].map(icon => (
        <button key={icon} aria-label={icon} className="flex w-7 items-center gap-1.5"><Icon name={icon} /><Caret /></button>
      ))}
      <button aria-label="Appearance"><Icon name="greyBall" /></button>
      {['scene', 'monitor'].map(icon => (
        <button key={icon} aria-label={icon} className="flex w-7 items-center gap-1.5"><Icon name={icon} /><Caret /></button>
      ))}
    </div>
  )
}

function Viewport() {
  return (
    <main className="relative min-w-0 flex-1 bg-white">
      <Sketch />
      <HeadsUpBar />

      <div className="absolute top-1 left-0.5 flex items-center text-[11px]">
        <button aria-label="Expand tree" className="flex size-2.5 items-center justify-center border border-[#85848b] text-[9px] leading-none">+</button>
        <span className="mx-px w-1 border-t border-dotted border-[#85848b]" />
        <Icon name="part" />
        <span className="pl-1 whitespace-nowrap">Part6&nbsp; (Default&lt;&lt;Default&gt;_...</span>
      </div>

      <div className="absolute -top-3.5 right-2.5 flex gap-1.5">
        {['paneLeft', 'paneRight', 'minimize', 'restore', 'close'].map(icon => (
          <button key={icon} aria-label={icon} className="flex size-4 items-center justify-center"><Icon name={icon} className="size-3.5" /></button>
        ))}
      </div>

      {/* confirmation corner */}
      <div className="absolute top-2 right-10 opacity-35">
        <svg viewBox="0 0 60 54" className="h-[54px] w-[60px]" fill="none" aria-hidden="true">
          <path d="M17 2H1v19l4 3h9" stroke="#8f8ad8" strokeWidth="2.200" />
          <path d="M4 15l14-8 3 2-13 8z" fill="#f0e08a" stroke="#b8a860" />
          <path d="M22 13c9 3 9 13 0 15" stroke="#b98ad0" strokeWidth="4" />
          <path d="M23 21l-9 7 9 7z" fill="#b98ad0" />
          <path d="M39 35l17 17M56 35L39 52" stroke="#e06a74" strokeWidth="3.500" />
        </svg>
      </div>

      {/* task pane tabs */}
      <div className="absolute top-[37px] right-0 flex w-[23px] flex-col gap-px border border-[#66656c] bg-[#66656c]">
        {['forum', 'house', 'library', 'folder', 'palette', 'globe', 'props'].map(icon => (
          <button
            key={icon}
            aria-label={icon}
            className={`flex h-[22px] items-center justify-center ${icon === 'globe' ? 'bg-[#f4f3f8]' : 'bg-[#a9a8af]'}`}
          >
            <Icon name={icon} />
          </button>
        ))}
      </div>

      <div aria-hidden="true" className="absolute top-[243px] left-0 flex h-9 w-2 flex-col items-center justify-center gap-1.5 border border-l-0 border-[#55545a] bg-[#efeef3]">
        <i className="size-[3px] rounded-full bg-[#3a3940]" />
        <i className="size-[3px] rounded-full bg-[#3a3940]" />
        <i className="size-[3px] rounded-full bg-[#3a3940]" />
      </div>

      {/* view triad */}
      <div className="absolute bottom-0 left-2.5 w-[70px] text-[11px] leading-4">
        <svg viewBox="0 0 70 45" className="h-[45px] w-[70px]" fill="none" aria-hidden="true">
          <path d="M28 6h16" stroke="#b8252c" strokeWidth="3" />
          <path d="M41 2l9 4-9 4z" fill="#b8252c" />
          <path d="M28 6v18" stroke="#3a34c0" strokeWidth="3" />
          <path d="M24 24l4 10 4-10z" fill="#1c14a0" />
          <circle cx="28" cy="6" r="4" fill="#15602a" />
          <path d="M56 2l5 8M61 2l-5 8" stroke="#dc5a60" strokeWidth="1.200" />
          <path d="M26 36h4l-4 6h5" stroke="#5a54d8" strokeWidth="1.200" />
        </svg>
        <b className="block text-black">*Top</b>
      </div>
    </main>
  )
}

function ToolStrip() {
  const icons = ['greyGlobe', 'greyLink', 'greySheet', 'greyTree', 'greyStack', 'greyFrame', 'greyPair', 'greyGlobe', 'greyPair', 'greyPair']
  return (
    <aside className="flex w-6 shrink-0 flex-col items-center gap-[5px] border-l border-[#c4c3ca] bg-[#d6d5dc] pt-1">
      <div className="mb-1 w-5 border-t-2 border-dotted border-[#85848b]" />
      {icons.map((icon, i) => (
        <button key={i} aria-label={`${icon} ${i + 1}`}><Icon name={icon} /></button>
      ))}
    </aside>
  )
}

// "&" marks the mnemonic letter, null is a separator
const menuItems = [
  { label: 'Select', icon: 'cursor' },
  null,
  { label: 'E&nd chain  (double-click)' },
  { label: '&Switch to arc  ( A )', hover: true },
  null,
  { label: '&Line', icon: 'line' },
  { label: '&Corner Rectangle', icon: 'rect' },
  { label: 'Cen&ter Rectangle', icon: 'centerRect' },
  null,
  { label: 'St&raight Slot', icon: 'slot' },
  { label: 'Pol&ygon', icon: 'polygon' },
  null,
  { label: 'Circle', icon: 'circle' },
  { label: 'Peri&meter Circle', icon: 'perimeter' },
  { label: 'Centerpoint Arc', icon: 'arc' },
  { label: 'Tan&gent Arc', icon: 'tangentArc' },
  { label: '3 Point Arc', icon: 'threeArc' },
  null,
  { label: 'Ellipse', icon: 'ellipse' },
  { label: 'Conic', icon: 'conic' },
  null,
  { label: 'Spline', icon: 'spline' },
  { label: 'Style Spline', icon: 'styleSpline' },
  { label: 'Point', icon: 'point' },
  { label: 'Centerline', icon: 'centerline', pressed: true },
  null,
  { label: '&Recent Commands', submenu: true },
  { label: '&More Dimensions', submenu: true },
  { label: 'Selected Entity', heading: true },
  { label: 'Delete', icon: 'del' },
  { label: 'Quick Snaps', submenu: true },
  null,
]

function Mnemonic({ label }) {
  const [before, after] = label.split('&')
  if (after === undefined) return label
  return <>{before}<u>{after[0]}</u>{after.slice(1)}</>
}

function MenuItem({ item }) {
  if (!item) {
    return (
      <div role="separator" className="flex h-[9px]">
        <div className="w-[28px] border-r border-[#c4c3ca] bg-[#e0dfe6]" />
        <div className="mt-1 h-px flex-1 bg-[#aeadb8]" />
      </div>
    )
  }
  if (item.heading) {
    return <div className="h-[18px] bg-linear-to-b from-[#c6c5ce] via-[#a9a8b2] to-[#c6c5ce] pl-0.5 leading-4 font-bold text-[#26252b]">{item.label}</div>
  }
  return (
    <button className={`flex h-[19px] w-full items-center text-left ${item.hover ? 'border-y border-[#b4b3bc] bg-[#dcdbe4]' : ''}`}>
      <span className={`flex h-full w-[28px] items-center justify-center border-r border-[#c4c3ca] ${item.hover ? '' : 'bg-[#e0dfe6]'}`}>
        {item.icon && (
          <span className={item.pressed ? 'border border-[#66656c] bg-[#b4b3bc] px-0.5' : ''}><Icon name={item.icon} /></span>
        )}
      </span>
      <span className="pl-1 whitespace-pre"><Mnemonic label={item.label} /></span>
      {item.submenu && (
        <svg viewBox="0 0 4 6" className="mr-2 ml-auto h-[5px] w-[3px]"><path d="M0 0v6l4-3z" fill="#111" /></svg>
      )}
    </button>
  )
}

function ContextMenu() {
  return (
    <div className="absolute top-[81px] left-[779px] w-[188px] text-[11px]">
      <div className="flex h-[55px] flex-col gap-1 border border-[#66656c] bg-[#f2f0f8] px-1.5 pt-1 shadow-[2px_2px_1px_#77767d]">
        <div className="flex gap-1.5">
          <button aria-label="Make horizontal"><svg viewBox="0 0 16 16" className="size-4"><path d="M1 9h14" stroke="#333" strokeWidth="1.500" /></svg></button>
          <button aria-label="Make vertical"><svg viewBox="0 0 16 16" className="size-4"><path d="M7 3v12" stroke="#333" strokeWidth="1.500" /></svg></button>
          <button aria-label="Make fixed"><Icon name="fix" /></button>
        </div>
        <div className="flex h-5 items-center gap-[5px]">
          {['selectOther', 'construction', 'addImage', 'zoomSel', 'modify', 'dimension', 'editSketch'].map(icon => (
            <button
              key={icon}
              aria-label={icon}
              className={icon === 'construction' ? '-mx-0.5 border border-[#66656c] bg-[#b4b3bc] p-px' : ''}
            >
              <Icon name={icon} />
            </button>
          ))}
        </div>
      </div>
      <div className="mt-[11px] border border-[#66656c] bg-[#f2f0f8] pt-0.5 shadow-[2px_2px_1px_#77767d]">
        {menuItems.map((item, i) => <MenuItem key={i} item={item} />)}
        <button aria-label="More" className="flex h-[22px] w-full">
          <span className="h-full w-[28px] border-r border-[#c4c3ca] bg-[#e0dfe6]" />
          <span className="flex h-full flex-1 items-center justify-center pt-1 pr-7"><Chevrons down className="h-2 w-1.5" /></span>
        </button>
      </div>
      <svg viewBox="0 0 12 18" className="absolute top-[109px] left-[41px] h-[18px] w-3" aria-hidden="true">
        <path d="M1 1v13l3-3 2.500 6 2-1L6 10.500h5z" fill="#fff" stroke="#8c8b92" />
      </svg>
    </div>
  )
}

function BottomBars() {
  return (
    <footer className="shrink-0 text-[11px]">
      <div className="flex h-4 border-t border-b border-[#85848b] bg-[#e4e3ea]">
        <div className="flex w-[62px] items-center justify-around bg-[#b4b3ba]">
          {['M9 1v6L5 4zM3 1v6', 'M8 1v6L3 4z', 'M3 1v6l5-3z', 'M3 1v6l4-3zM9 1v6'].map(d => (
            <button key={d} aria-label="Scroll tabs"><svg viewBox="0 0 12 8" className="h-2 w-3"><path d={d} fill="#9a98a0" stroke="#9a98a0" /></svg></button>
          ))}
        </div>
        <button className="w-[54px] border-x-2 border-[#55545a] bg-[#efeef3] leading-3 font-bold text-[#26252b]">Model</button>
        <button className="w-[98px] border-r-2 border-[#55545a] bg-[#a9a8af] leading-3">Motion Study 1</button>
      </div>
      <div className="flex h-[17px] items-center bg-[#dad9e0] pl-0.5 whitespace-nowrap">
        <span>Key used to toggle through command options.</span>
        <span className="ml-auto w-[69px]">27.34mm</span>
        <span className="w-[59px]">56.87mm</span>
        <span className="w-[47px]">0mm</span>
        <span className="w-[88px]">Under Defined</span>
        <span className="w-[91px]">Editing Sketch1</span>
        <span className="w-[47px]"><Icon name="traffic" className="size-3.5" /></span>
        <span className="w-[52px]">MMGS</span>
        <Caret />
        <button aria-label="Quick tips" className="ml-[17px] flex h-3.5 w-3 items-center justify-center border border-[#3d8f7a] bg-white font-bold text-[#2a7f6a]">?</button>
        <button aria-label="Tags" className="mr-1 ml-[46px]"><Icon name="tag" className="size-3.5" /></button>
      </div>
    </footer>
  )
}

export default function App() {
  const [tab, setTab] = useState('Sketch')

  return (
    <div className="relative flex h-screen flex-col overflow-hidden bg-[#d9d8df] font-['Open_Sans','Noto_Sans',sans-serif] text-[#2f2e35]">
      <TitleBar />
      <ViewBar />
      <Ribbon />
      <div className="flex min-h-0 flex-1">
        <div className="flex min-w-0 flex-1 flex-col">
          <CommandTabs tab={tab} setTab={setTab} />
          <div className="flex min-h-0 flex-1">
            <PropertyPanel />
            <Viewport />
          </div>
        </div>
        <ToolStrip />
      </div>
      <BottomBars />
      <ContextMenu />
    </div>
  )
}
